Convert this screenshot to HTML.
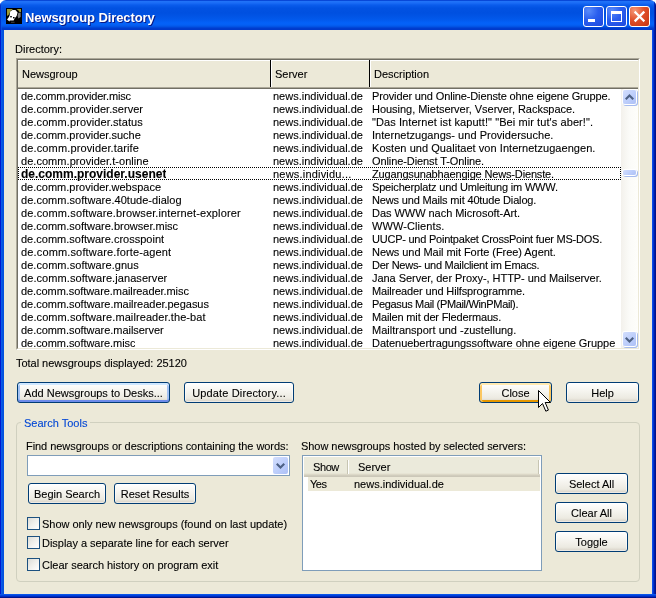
<!DOCTYPE html>
<html><head><meta charset="utf-8"><title>Newsgroup Directory</title>
<style>
*{box-sizing:border-box;margin:0;padding:0}
html,body{width:656px;height:598px;overflow:hidden;background:#fff}
body{position:relative;font-family:"Liberation Sans",sans-serif;font-size:11px;color:#000;line-height:13px;-webkit-text-stroke:0.1px #000}
.abs{position:absolute}
#title{position:absolute;left:0;top:0;width:656px;height:30px;border-radius:6px 6px 0 0;
 background:linear-gradient(180deg,#0848d8 0,#0848d8 1px,#2274f8 1px,#1a6cf6 3px,#0a5cec 5px,#0252e2 8px,#0050e0 13px,#0258ea 19px,#0462f8 23px,#0460f4 25px,#0250e0 27px,#003ed0 28px,#0038c8 30px);overflow:hidden}
#title .txt{-webkit-text-stroke:0;position:absolute;left:25px;top:10px;font-weight:bold;font-size:13px;line-height:16px;color:#fff;text-shadow:1px 1px 0 #0a1883;white-space:nowrap;letter-spacing:-0.1px}
#bl{position:absolute;left:0;top:30px;width:4px;height:568px;background:linear-gradient(90deg,#0019cf 0,#0019cf 1px,#0a5be8 1px,#0a5be8 2px,#0855e0 2px,#0052de 4px)}
#br{position:absolute;left:652px;top:30px;width:4px;height:568px;background:linear-gradient(90deg,#0a4ce8 0,#0a4ce8 1px,#0034d0 1px,#0034d0 2px,#001ea8 2px,#001ea8 3px,#00138c 3px,#00138c 4px)}
#bb{position:absolute;left:0;top:594px;width:656px;height:4px;background:linear-gradient(180deg,#0a55e8 0,#0a55e8 1px,#0040dc 1px,#0040dc 2px,#002cc0 2px,#002cc0 3px,#00138c 3px,#00138c 4px)}
.tb{position:absolute;top:6px;width:21px;height:21px;border:1px solid #fff;border-radius:3px}
.tb.b{background:radial-gradient(circle at 25% 20%,#5a8cfa 0,#2a5eee 45%,#1c48de 100%)}
.tb.r{background:radial-gradient(circle at 25% 20%,#f59878 0,#e0502a 45%,#c7330f 100%)}
.lbl{position:absolute;white-space:nowrap;line-height:13px;height:13px}
/* big list */
#lv{position:absolute;left:16px;top:58px;width:624px;height:292px;border:1px solid;border-color:#aca899 #fff #fff #aca899}
#lv .in{position:absolute;left:0;top:0;right:0;bottom:0;border:1px solid;border-color:#716f64 #ece9d8 #ece9d8 #716f64;background:#fff}
.hd{position:absolute;left:18px;top:60px;width:620px;height:29px;background:#ece9d8;border-top:1px solid #fff;box-shadow:inset 0 -1px 0 #716f64, inset 0 -2px 0 #aca899}
.hd span{position:absolute;top:7px;line-height:13px;white-space:nowrap}
.hd i{position:absolute;top:-1px;width:2px;height:27px;border-left:1px solid #000;background:#fff}
.row{position:absolute;left:18px;width:603px;height:13px;white-space:nowrap}
.row span{position:absolute;top:1px;line-height:13px;height:13px;overflow:hidden}
.row .c1{left:3px}.row .c2{left:255px}.row .c3{left:354px}
.row.sel{outline:1px dotted #000;outline-offset:-1px}
.row.sel .c1{font-weight:bold;font-size:12px}
/* scrollbar */
#sb{position:absolute;left:621px;top:89px;width:17px;height:259px;background:linear-gradient(90deg,#f3f1ec 0,#fbfbf8 50%,#fefefb 100%)}
.sbtn{position:absolute;left:2px;width:13px;height:14px;border-radius:2px;background:linear-gradient(135deg,#d3defd 0,#bdcefb 55%,#adc0f6 100%);box-shadow:0 0 0 1px #fff, 1px 1px 0 1px #a6bbee}
.btn{position:absolute;height:21px;border:1px solid #003c74;border-radius:3px;background:linear-gradient(180deg,#fff 0,#f6f5f0 40%,#eceae1 80%,#d6d0c5 100%);text-align:center;line-height:19px;padding-top:1px;white-space:nowrap;box-shadow:inset 0 0 0 1px rgba(255,255,255,.5)}
.btn.def{box-shadow:inset 0 2px 0 #cee7ff, inset 0 -2px 0 #6d8bea, inset 2px 0 0 #a3c2f3, inset -2px 0 0 #a3c2f3}
.btn.hot{box-shadow:inset 0 2px 0 0 #ffe9b0, inset 2px 0 0 0 #fbc761, inset -2px 0 0 0 #fbc761, inset 0 -2px 0 0 #e59700}
#gb{position:absolute;left:16px;top:422px;width:624px;height:160px;border:1px solid #d0d0bf;border-radius:4px}
#gbl{-webkit-text-stroke:0.1px #0046d5;position:absolute;left:21px;top:417px;padding:0 3px;background:#ece9d8;color:#0046d5;line-height:13px;white-space:nowrap}
#combo{position:absolute;left:27px;top:455px;width:263px;height:21px;border:1px solid #7f9db9;background:#fff}
#combo .dd{position:absolute;left:245px;top:1px;width:15px;height:17px;border-radius:2px;background:linear-gradient(135deg,#d3defd 0,#bdcefb 55%,#adc0f6 100%)}
.cb{position:absolute;left:27px;width:13px;height:13px;border:1px solid #1c5180;background:linear-gradient(135deg,#dcdcd7 0,#f0f0ec 50%,#fff 100%)}
#lv2{position:absolute;left:302px;top:455px;width:240px;height:116px;border:1px solid #7f9db9;background:#fff}
#lv2 .h{position:absolute;left:1px;top:1px;width:236px;height:20px;background:linear-gradient(180deg,#ebeadb 0,#ebeadb 16px,#e2decd 17px,#d6d2c2 18px,#cbc7b8 19px,#cbc7b8 20px)}
#wrap{position:absolute;left:0;top:0;width:656px;height:598px;will-change:transform}
</style></head><body>
<div id="wrap">
<div id="title">
 <svg class="abs" style="left:6px;top:8px" width="16" height="16" viewBox="0 0 16 16"><rect width="16" height="16" fill="#000"/><polygon points="1,1 7,1 4.5,3 3,6.5 1,8" fill="#9c9a34"/><polygon points="10.5,1 15,1 15,4 13.5,4 12.5,2.5" fill="#9c9a34"/><polygon points="12.3,5 14.6,4.6 14.6,9 12.4,10.6 11.6,8" fill="#808080"/><polygon points="4.2,3.4 6.5,2 9.4,2 11.6,4.4 10.6,8 8.6,10.4 7.6,12.4 3.6,12.4 3.6,13.6 1,11.4 2.6,9.4 3.6,7.4" fill="#fff"/><rect x="4.2" y="8" width="1.6" height="1.4" fill="#000"/><rect x="7" y="9" width="1.6" height="1.4" fill="#000"/><rect x="5" y="13.8" width="3.6" height="0.8" fill="#555"/></svg>
 <div class="abs" style="left:0;top:0;width:1px;height:30px;background:#0030c8"></div><div class="abs" style="left:1px;top:4px;width:1px;height:26px;background:#0a5be8;opacity:.6"></div><div class="abs" style="left:654px;top:0;width:2px;height:30px;background:linear-gradient(90deg,#0028b8 0,#0028b8 1px,#00138c 1px,#00138c 2px)"></div>
 <div class="txt">Newsgroup Directory</div>
 <div class="tb b" style="left:583px"><div class="abs" style="left:4px;top:12px;width:7px;height:3px;background:#fff"></div></div>
 <div class="tb b" style="left:606px"><div class="abs" style="left:4px;top:4px;width:11px;height:11px;border:1px solid #fff;border-top-width:3px"></div></div>
 <div class="tb r" style="left:629px"><svg class="abs" style="left:3px;top:3px" width="13" height="13" viewBox="0 0 13 13"><path d="M2.5 2.5L10.5 10.5M10.5 2.5L2.5 10.5" stroke="#fff" stroke-width="2.3" stroke-linecap="square"/></svg></div>
</div>
<div class="abs" style="left:4px;top:30px;width:648px;height:564px;background:#ece9d8"></div>
<div id="bl"></div><div id="br"></div><div id="bb"></div>

<div class="lbl" style="left:15px;top:43px">Directory:</div>
<div id="lv"><div class="in"></div></div>
<div class="hd"><span style="left:4px">Newsgroup</span><i style="left:252px"></i><span style="left:257px">Server</span><i style="left:351px"></i><span style="left:356px">Description</span></div>
<div class="row" style="top:89px"><span class="c1" style="letter-spacing:-0.15px">de.comm.provider.misc</span><span class="c2">news.individual.de</span><span class="c3" style="letter-spacing:-0.13px">Provider und Online-Dienste ohne eigene Gruppe.</span></div>
<div class="row" style="top:102px"><span class="c1" style="letter-spacing:0.045px">de.comm.provider.server</span><span class="c2">news.individual.de</span><span class="c3" style="letter-spacing:-0.026px">Housing, Mietserver, Vserver, Rackspace.</span></div>
<div class="row" style="top:115px"><span class="c1" style="letter-spacing:0.091px">de.comm.provider.status</span><span class="c2">news.individual.de</span><span class="c3" style="letter-spacing:0.083px">"Das Internet ist kaputt!" "Bei mir tut's aber!".</span></div>
<div class="row" style="top:128px"><span class="c1">de.comm.provider.suche</span><span class="c2">news.individual.de</span><span class="c3" style="letter-spacing:0.029px">Internetzugangs- und Providersuche.</span></div>
<div class="row" style="top:141px"><span class="c1" style="letter-spacing:0.136px">de.comm.provider.tarife</span><span class="c2">news.individual.de</span><span class="c3" style="letter-spacing:0.048px">Kosten und Qualitaet von Internetzugaengen.</span></div>
<div class="row" style="top:154px"><span class="c1" style="letter-spacing:0.042px">de.comm.provider.t-online</span><span class="c2">news.individual.de</span><span class="c3" style="letter-spacing:-0.091px">Online-Dienst T-Online.</span></div>
<div class="row sel" style="top:167px"><span class="c1">de.comm.provider.usenet</span><span class="c2" style="letter-spacing:0.2px">news.individu...</span><span class="c3" style="letter-spacing:-0.156px">Zugangsunabhaengige News-Dienste.</span></div>
<div class="row" style="top:180px"><span class="c1">de.comm.provider.webspace</span><span class="c2">news.individual.de</span><span class="c3" style="letter-spacing:-0.176px">Speicherplatz und Umleitung im WWW.</span></div>
<div class="row" style="top:193px"><span class="c1" style="letter-spacing:0.034px">de.comm.software.40tude-dialog</span><span class="c2">news.individual.de</span><span class="c3" style="letter-spacing:-0.156px">News und Mails mit 40tude Dialog.</span></div>
<div class="row" style="top:206px"><span class="c1" style="letter-spacing:0.122px">de.comm.software.browser.internet-explorer</span><span class="c2">news.individual.de</span><span class="c3" style="letter-spacing:-0.038px">Das WWW nach Microsoft-Art.</span></div>
<div class="row" style="top:219px"><span class="c1">de.comm.software.browser.misc</span><span class="c2">news.individual.de</span><span class="c3" style="letter-spacing:0.091px">WWW-Clients.</span></div>
<div class="row" style="top:232px"><span class="c1">de.comm.software.crosspoint</span><span class="c2">news.individual.de</span><span class="c3" style="letter-spacing:-0.233px">UUCP- und Pointpaket CrossPoint fuer MS-DOS.</span></div>
<div class="row" style="top:245px"><span class="c1" style="letter-spacing:0.148px">de.comm.software.forte-agent</span><span class="c2">news.individual.de</span><span class="c3" style="letter-spacing:-0.056px">News und Mail mit Forte (Free) Agent.</span></div>
<div class="row" style="top:258px"><span class="c1" style="letter-spacing:0.05px">de.comm.software.gnus</span><span class="c2">news.individual.de</span><span class="c3" style="letter-spacing:-0.273px">Der News- und Mailclient im Emacs.</span></div>
<div class="row" style="top:271px"><span class="c1" style="letter-spacing:0.077px">de.comm.software.janaserver</span><span class="c2">news.individual.de</span><span class="c3" style="letter-spacing:-0.044px">Jana Server, der Proxy-, HTTP- und Mailserver.</span></div>
<div class="row" style="top:284px"><span class="c1" style="letter-spacing:-0.065px">de.comm.software.mailreader.misc</span><span class="c2">news.individual.de</span><span class="c3" style="letter-spacing:-0.138px">Mailreader und Hilfsprogramme.</span></div>
<div class="row" style="top:297px"><span class="c1" style="letter-spacing:-0.029px">de.comm.software.mailreader.pegasus</span><span class="c2">news.individual.de</span><span class="c3" style="letter-spacing:-0.345px">Pegasus Mail (PMail/WinPMail).</span></div>
<div class="row" style="top:310px"><span class="c1" style="letter-spacing:0.088px">de.comm.software.mailreader.the-bat</span><span class="c2">news.individual.de</span><span class="c3" style="letter-spacing:-0.16px">Mailen mit der Fledermaus.</span></div>
<div class="row" style="top:323px"><span class="c1" style="letter-spacing:-0.038px">de.comm.software.mailserver</span><span class="c2">news.individual.de</span><span class="c3">Mailtransport und -zustellung.</span></div>
<div class="row" style="top:336px"><span class="c1" style="letter-spacing:-0.05px">de.comm.software.misc</span><span class="c2">news.individual.de</span><span class="c3" style="letter-spacing:-0.045px">Datenuebertragungssoftware ohne eigene Gruppe</span></div>

<div id="sb">
 <div class="sbtn" style="top:1px"><svg class="abs" style="left:2px;top:4px" width="9" height="6" viewBox="0 0 9 6"><polygon points="4.5,0 9,4.5 7.5,6 4.5,3 1.5,6 0,4.5" fill="#4d6185"/></svg></div>
 <div class="sbtn" style="top:81px;height:5px"></div>
 <div class="sbtn" style="top:243px"><svg class="abs" style="left:2px;top:5px" width="9" height="6" viewBox="0 0 9 6"><polygon points="4.5,6 9,1.5 7.5,0 4.5,3 1.5,0 0,1.5" fill="#4d6185"/></svg></div>
</div>
<div class="lbl" style="left:16px;top:357px;letter-spacing:-0.03px">Total newsgroups displayed: 25120</div>

<div class="btn def" style="left:17px;top:382px;width:153px">Add Newsgroups to Desks...</div>
<div class="btn" style="left:184px;top:382px;width:110px;letter-spacing:0.15px">Update Directory...</div>
<div class="btn hot" style="left:479px;top:382px;width:73px">Close</div>
<div class="btn" style="left:566px;top:382px;width:73px">Help</div>

<div id="gb"></div>
<div id="gbl">Search Tools</div>
<div class="lbl" style="left:26px;top:440px;letter-spacing:-0.055px">Find newsgroups or descriptions containing the words:</div>
<div id="combo"><div class="dd"><svg class="abs" style="left:3px;top:6px" width="9" height="6" viewBox="0 0 9 6"><polygon points="4.5,6 9,1.5 7.5,0 4.5,3 1.5,0 0,1.5" fill="#4d6185"/></svg></div></div>
<div class="btn" style="left:28px;top:483px;width:78px">Begin Search</div>
<div class="btn" style="left:114px;top:483px;width:82px">Reset Results</div>
<div class="cb" style="top:517px"></div><div class="lbl" style="left:42px;top:518px;letter-spacing:-0.03px">Show only new newsgroups (found on last update)</div>
<div class="cb" style="top:536px"></div><div class="lbl" style="left:42px;top:537px;letter-spacing:-0.03px">Display a separate line for each server</div>
<div class="cb" style="top:558px"></div><div class="lbl" style="left:42px;top:559px;letter-spacing:-0.03px">Clear search history on program exit</div>

<div class="lbl" style="left:301px;top:440px;letter-spacing:-0.045px">Show newsgroups hosted by selected servers:</div>
<div id="lv2"><div class="h">
  <span class="lbl" style="left:9px;top:4px;letter-spacing:-0.4px">Show</span><span class="lbl" style="left:54px;top:4px">Server</span>
  <div class="abs" style="left:43px;top:3px;width:1px;height:14px;background:#c7c5b2"></div><div class="abs" style="left:44px;top:3px;width:1px;height:14px;background:#fff"></div>
  <div class="abs" style="left:234px;top:3px;width:1px;height:14px;background:#c7c5b2"></div><div class="abs" style="left:235px;top:3px;width:1px;height:14px;background:#fff"></div>
 </div>
 <div class="abs" style="left:5px;top:21px;width:232px;height:14px;background:#ece9d8"></div>
 <span class="lbl" style="left:7px;top:22px;letter-spacing:-0.5px">Yes</span><span class="lbl" style="left:51px;top:22px">news.individual.de</span>
</div>
<div class="btn" style="left:555px;top:473px;width:73px">Select All</div>
<div class="btn" style="left:555px;top:502px;width:73px">Clear All</div>
<div class="btn" style="left:555px;top:531px;width:73px">Toggle</div>

<svg class="abs" style="left:538px;top:390px" width="14" height="23" viewBox="0 0 14 23"><path d="M0.5 0.5V17.5L4.5 13.5L7.8 21.2L10.4 20.1L7.2 12.5H12.5Z" fill="#fff" stroke="#000" stroke-width="1"/></svg>
</div>
</body></html>
